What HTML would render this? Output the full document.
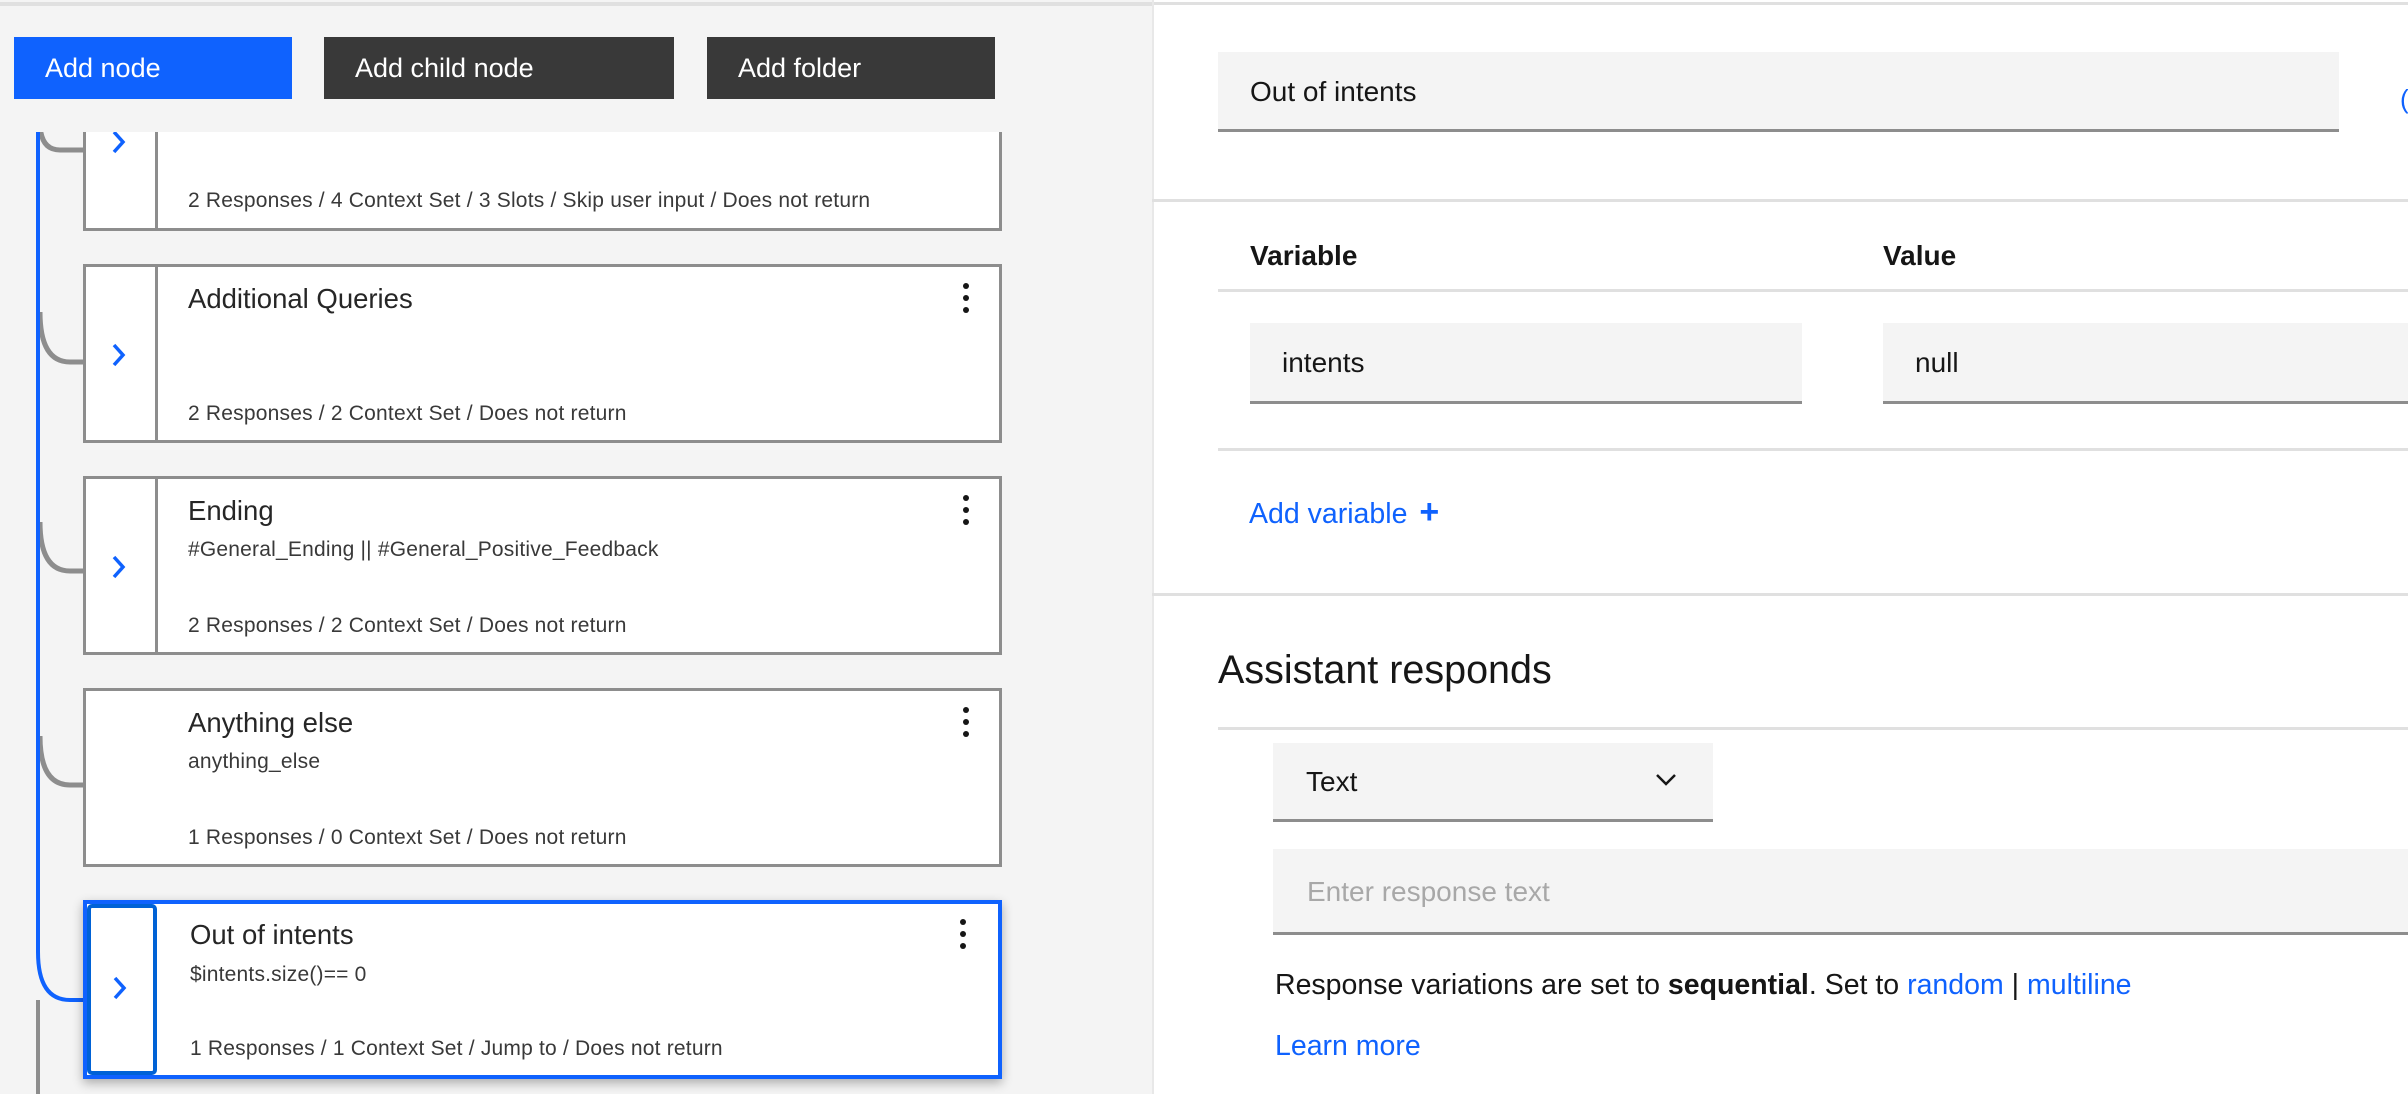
<!DOCTYPE html>
<html><head><meta charset="utf-8"><style>
*{margin:0;padding:0;box-sizing:border-box}
body{width:2408px;height:1094px;overflow:hidden;background:#fff;font-family:"Liberation Sans",sans-serif;color:#161616;position:relative}
.a{position:absolute;white-space:nowrap}
#left{position:absolute;left:0;top:0;width:1152px;height:1094px;background:#f4f4f4}
.btn{position:absolute;top:37px;height:62px;color:#fff;font-size:27px;line-height:62px;padding-left:31px}
.card{position:absolute;left:83px;width:919px;background:#fff;border:3px solid #8d8d8d}
.card .div{position:absolute;left:69px;top:0;bottom:0;width:3px;background:#8d8d8d}
.t{position:absolute;left:102px;font-size:27.5px;color:#262626}
.s{position:absolute;left:102px;font-size:21px;color:#393939;letter-spacing:.2px}
.dots{position:absolute;right:30px;top:16px;width:6px}
.dots i{display:block;width:6px;height:6px;border-radius:50%;background:#161616;margin-bottom:6px}
.line{position:absolute;height:3px;background:#e0e0e0}
.inp{position:absolute;background:#f4f4f4;border-bottom:3px solid #8d8d8d;font-size:28px}
</style></head><body>
<div id="left">
<svg class="a" style="left:0;top:132px" width="100" height="962">
<path d="M40 -30 V-10 Q40 18 60 18 H83" stroke="#8d8d8d" stroke-width="5" fill="none"/>
<path d="M40 180 Q40 230 70 230 H83" stroke="#8d8d8d" stroke-width="5" fill="none"/>
<path d="M40 390 Q40 439 70 439 H83" stroke="#8d8d8d" stroke-width="5" fill="none"/>
<path d="M40 604 Q40 653 70 653 H83" stroke="#8d8d8d" stroke-width="5" fill="none"/>
<path d="M38 0 V820 Q38 868 70 868 H86" stroke="#0f62fe" stroke-width="4" fill="none"/>
<path d="M38 868 V962" stroke="#8d8d8d" stroke-width="4" fill="none"/>
</svg>
<div class="card" style="top:120px;height:111px;border-top:none;clip-path:inset(12px -5px -5px -5px)">
<div class="div"></div>
<svg class="a" style="left:23px;top:8px" width="20" height="28"><path d="M5 4 L14 14 L5 24" stroke="#0f62fe" stroke-width="3.5" fill="none"/></svg>
<div class="s" style="top:69px">2 Responses / 4 Context Set / 3 Slots / Skip user input / Does not return</div>
</div>
<div class="card" style="top:264px;height:179px">
<div class="div"></div>
<svg class="a" style="left:23px;top:74px" width="20" height="28"><path d="M5 4 L14 14 L5 24" stroke="#0f62fe" stroke-width="3.5" fill="none"/></svg>
<div class="t" style="top:16px">Additional Queries</div>
<div class="dots"><i></i><i></i><i></i></div>
<div class="s" style="top:135px">2 Responses / 2 Context Set / Does not return</div>
</div>
<div class="card" style="top:476px;height:179px">
<div class="div"></div>
<svg class="a" style="left:23px;top:74px" width="20" height="28"><path d="M5 4 L14 14 L5 24" stroke="#0f62fe" stroke-width="3.5" fill="none"/></svg>
<div class="t" style="top:16px">Ending</div>
<div class="s" style="top:59px">#General_Ending || #General_Positive_Feedback</div>
<div class="dots"><i></i><i></i><i></i></div>
<div class="s" style="top:135px">2 Responses / 2 Context Set / Does not return</div>
</div>
<div class="card" style="top:688px;height:179px">
<div class="t" style="top:16px">Anything else</div>
<div class="s" style="top:59px">anything_else</div>
<div class="dots"><i></i><i></i><i></i></div>
<div class="s" style="top:135px">1 Responses / 0 Context Set / Does not return</div>
</div>
<div class="card" style="top:900px;height:179px;border:4px solid #0f62fe;box-shadow:0 4px 10px rgba(0,0,0,.3)">
<div class="a" style="left:0;top:0;width:70px;height:171px;border:4px solid #0062d6;border-radius:5px"></div>
<svg class="a" style="left:23px;top:70px" width="20" height="28"><path d="M5 4 L14 14 L5 24" stroke="#0f62fe" stroke-width="3.5" fill="none"/></svg>
<div class="t" style="top:15px;left:103px">Out of intents</div>
<div class="s" style="top:59px;left:103px">$intents.size()== 0</div>
<div class="dots" style="top:15px;right:32px"><i></i><i></i><i></i></div>
<div class="s" style="top:133px;left:103px">1 Responses / 1 Context Set / Jump to / Does not return</div>
</div>
<div class="a" style="left:0;top:0;width:1152px;height:132px;background:#f4f4f4"></div>
<div class="line" style="left:0;top:2px;width:1152px;height:4px"></div>
<div class="btn" style="left:14px;width:278px;background:#0f62fe">Add node</div>
<div class="btn" style="left:324px;width:350px;background:#393939">Add child node</div>
<div class="btn" style="left:707px;width:288px;background:#393939">Add folder</div>
</div>
<div class="line" style="left:1152px;top:2px;width:1256px"></div>
<div class="a" style="left:1152px;top:0;width:2px;height:1094px;background:#e8e8e8"></div>
<div class="inp" style="left:1218px;top:52px;width:1121px;height:80px;line-height:80px;padding-left:32px">Out of intents</div>
<div class="a" style="left:2400px;top:84px;color:#0f62fe;font-size:26px">(</div>
<div class="line" style="left:1152px;top:199px;width:1256px"></div>
<div class="a" style="left:1250px;top:240px;font-size:28px;font-weight:bold">Variable</div>
<div class="a" style="left:1883px;top:240px;font-size:28px;font-weight:bold">Value</div>
<div class="line" style="left:1218px;top:289px;width:1190px"></div>
<div class="inp" style="left:1250px;top:323px;width:552px;height:81px;line-height:80px;padding-left:32px">intents</div>
<div class="inp" style="left:1883px;top:323px;width:540px;height:81px;line-height:80px;padding-left:32px">null</div>
<div class="line" style="left:1218px;top:448px;width:1190px"></div>
<div class="a" style="left:1249px;top:498px;font-size:28.5px;color:#0f62fe">Add variable <b style="font-size:34px;line-height:20px;margin-left:4px">+</b></div>
<div class="line" style="left:1152px;top:593px;width:1256px"></div>
<div class="a" style="left:1218px;top:648px;font-size:39.5px">Assistant responds</div>
<div class="line" style="left:1218px;top:727px;width:1190px"></div>
<div class="inp" style="left:1273px;top:743px;width:440px;height:79px;line-height:78px;padding-left:33px">Text
<svg class="a" style="left:382px;top:30px" width="22" height="14"><path d="M2 2 L11 11 L20 2" stroke="#161616" stroke-width="2.5" fill="none"/></svg></div>
<div class="inp" style="left:1273px;top:849px;width:1140px;height:86px;line-height:86px;padding-left:34px;color:#a8a8a8">Enter response text</div>
<div class="a" style="left:1275px;top:969px;font-size:28.5px">Response variations are set to <b>sequential</b>. Set to <span style="color:#0f62fe">random</span> | <span style="color:#0f62fe">multiline</span></div>
<div class="a" style="left:1275px;top:1030px;font-size:28.5px;color:#0f62fe">Learn more</div>
</body></html>
